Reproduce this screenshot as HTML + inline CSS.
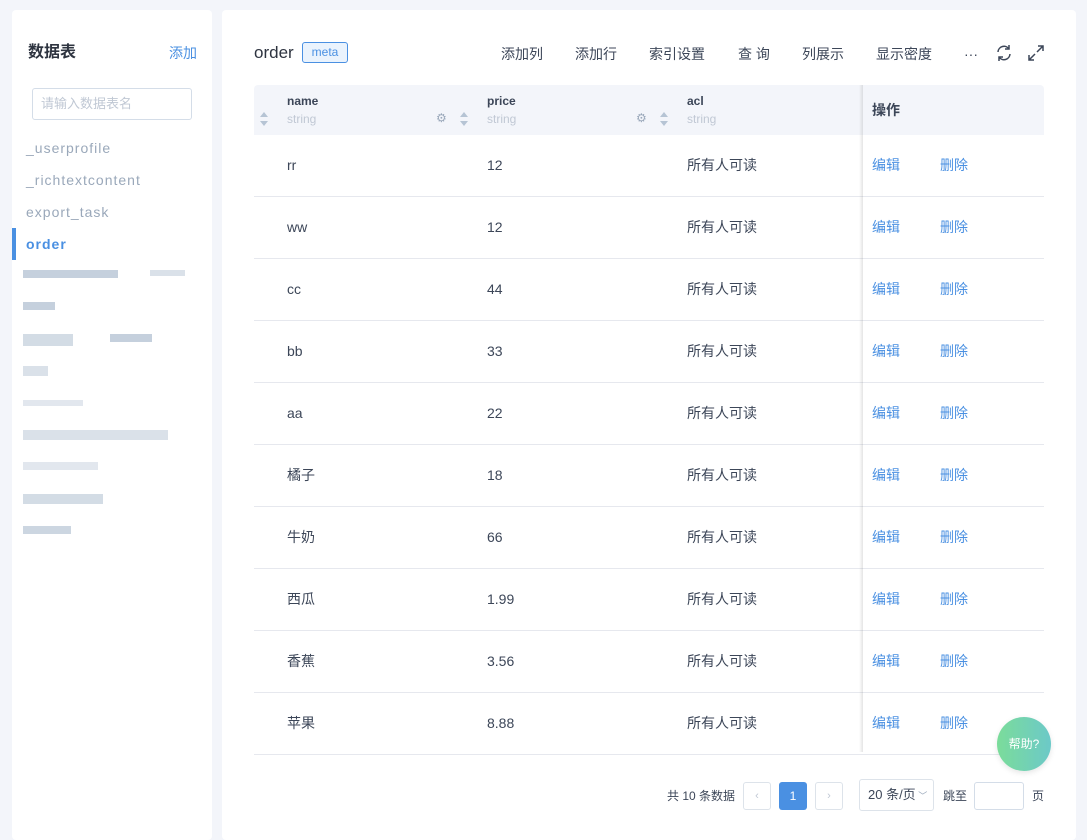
<!DOCTYPE html>
<html><head><meta charset="utf-8"><style>
*{box-sizing:border-box;margin:0;padding:0}
body{width:1087px;height:828px;background:#f3f5fa;font-family:"Liberation Sans","Noto Sans CJK SC",sans-serif;position:relative;overflow:hidden;color:#3c4658;line-height:20px}
.side{position:absolute;left:12px;top:10px;width:200px;height:830px;background:#fff;border-radius:4px}
.main{position:absolute;left:222px;top:10px;width:854px;height:830px;background:#fff;border-radius:4px}
.a{position:absolute;white-space:nowrap;line-height:20px}
.blk{position:absolute;background:#b6c4d4}
.row{position:absolute;left:254px;width:790px;height:62px;border-bottom:1px solid #e6e8ee;font-size:14px}
.row span{position:absolute;top:20px;line-height:20px}
.lk{color:#4a90e2}
</style></head><body>
<div class="side"></div>
<div class="main"></div>
<div class="a" style="left:28px;top:43px;font-size:16px;font-weight:bold;color:#2e3440">数据表</div>
<div class="a lk" style="left:169px;top:43px;font-size:14px">添加</div>
<div class="a" style="left:32px;top:88px;width:160px;height:32px;border:1px solid #d4dde8;border-radius:3px;font-size:13px;color:#c0c8d4;padding:5px 8px">请输入数据表名</div>
<div class="a" style="left:26px;top:138px;font-size:14px;color:#9aa8ba;letter-spacing:1px">_userprofile</div>
<div class="a" style="left:26px;top:170px;font-size:14px;color:#9aa8ba;letter-spacing:1px">_richtextcontent</div>
<div class="a" style="left:26px;top:202px;font-size:14px;color:#9aa8ba;letter-spacing:1px">export_task</div>
<div class="a" style="left:12px;top:228px;width:4px;height:32px;background:#4a90e2"></div>
<div class="a" style="left:26px;top:234px;font-size:14px;font-weight:bold;color:#4a90e2;letter-spacing:1px">order</div>
<div class="blk" style="left:23px;top:270px;width:95px;height:8px;opacity:.8"></div><div class="blk" style="left:150px;top:270px;width:35px;height:6px;opacity:.5"></div>
<div class="blk" style="left:23px;top:302px;width:32px;height:8px;opacity:.8"></div>
<div class="blk" style="left:23px;top:334px;width:50px;height:12px;opacity:.6"></div><div class="blk" style="left:110px;top:334px;width:42px;height:8px;opacity:.8"></div>
<div class="blk" style="left:23px;top:366px;width:25px;height:10px;opacity:.5"></div>
<div class="blk" style="left:23px;top:400px;width:60px;height:6px;opacity:.4"></div>
<div class="blk" style="left:23px;top:430px;width:145px;height:10px;opacity:.5"></div>
<div class="blk" style="left:23px;top:462px;width:75px;height:8px;opacity:.4"></div>
<div class="blk" style="left:23px;top:494px;width:80px;height:10px;opacity:.6"></div>
<div class="blk" style="left:23px;top:526px;width:48px;height:8px;opacity:.7"></div>

<div class="a" style="left:254px;top:43px;font-size:17px;color:#2e3440">order</div>
<div class="a" style="left:302px;top:42px;width:46px;height:21px;border:1px solid #4a90e2;background:#eaf3fd;border-radius:3px;font-size:12px;color:#4a90e2;text-align:center;line-height:19px">meta</div>
<div class="a" style="left:501px;top:44px;font-size:14px">添加列</div>
<div class="a" style="left:575px;top:44px;font-size:14px">添加行</div>
<div class="a" style="left:649px;top:44px;font-size:14px">索引设置</div>
<div class="a" style="left:738px;top:44px;font-size:14px">查 询</div>
<div class="a" style="left:802px;top:44px;font-size:14px">列展示</div>
<div class="a" style="left:876px;top:44px;font-size:14px">显示密度</div>
<div class="a" style="left:964px;top:44px;font-size:14px">···</div>
<svg class="a" style="left:995px;top:44px" width="18" height="18" viewBox="0 0 18 18" fill="none" stroke="#3c4658" stroke-width="1.5"><path d="M3 8a6 6 0 0 1 11-3M15 10a6 6 0 0 1-11 3"/><path d="M14 1v4h-4M4 17v-4h4"/></svg>
<svg class="a" style="left:1027px;top:44px" width="18" height="18" viewBox="0 0 18 18" fill="none" stroke="#3c4658" stroke-width="1.5"><path d="M10 8l6-6M11 2h5v5M8 10l-6 6M2 11v5h5"/></svg>

<div class="a" style="left:254px;top:85px;width:790px;height:50px;background:#f3f5fa;border-radius:4px 4px 0 0"></div>
<svg class="a" style="left:260px;top:112px" width="8" height="14"><path d="M4 0L8 5H0z M4 14L8 9H0z" fill="#b6c4d4"/></svg>
<div class="a" style="left:287px;top:91px;font-size:12px;font-weight:bold;color:#3c4658">name</div>
<div class="a" style="left:287px;top:109px;font-size:12px;color:#c0c8d4">string</div>
<div class="a" style="left:436px;top:108px;font-size:12px;color:#9aa8ba">⚙</div>
<svg class="a" style="left:460px;top:112px" width="8" height="14"><path d="M4 0L8 5H0z M4 14L8 9H0z" fill="#b6c4d4"/></svg>
<div class="a" style="left:487px;top:91px;font-size:12px;font-weight:bold">price</div>
<div class="a" style="left:487px;top:109px;font-size:12px;color:#c0c8d4">string</div>
<div class="a" style="left:636px;top:108px;font-size:12px;color:#9aa8ba">⚙</div>
<svg class="a" style="left:660px;top:112px" width="8" height="14"><path d="M4 0L8 5H0z M4 14L8 9H0z" fill="#b6c4d4"/></svg>
<div class="a" style="left:687px;top:91px;font-size:12px;font-weight:bold">acl</div>
<div class="a" style="left:687px;top:109px;font-size:12px;color:#c0c8d4">string</div>
<div class="a" style="left:872px;top:100px;font-size:14px;font-weight:bold">操作</div>

<div class="row" style="top:135px"><span style="left:33px">rr</span><span style="left:233px">12</span><span style="left:433px">所有人可读</span><span class="lk" style="left:618px">编辑</span><span class="lk" style="left:686px">删除</span></div>
<div class="row" style="top:197px"><span style="left:33px">ww</span><span style="left:233px">12</span><span style="left:433px">所有人可读</span><span class="lk" style="left:618px">编辑</span><span class="lk" style="left:686px">删除</span></div>
<div class="row" style="top:259px"><span style="left:33px">cc</span><span style="left:233px">44</span><span style="left:433px">所有人可读</span><span class="lk" style="left:618px">编辑</span><span class="lk" style="left:686px">删除</span></div>
<div class="row" style="top:321px"><span style="left:33px">bb</span><span style="left:233px">33</span><span style="left:433px">所有人可读</span><span class="lk" style="left:618px">编辑</span><span class="lk" style="left:686px">删除</span></div>
<div class="row" style="top:383px"><span style="left:33px">aa</span><span style="left:233px">22</span><span style="left:433px">所有人可读</span><span class="lk" style="left:618px">编辑</span><span class="lk" style="left:686px">删除</span></div>
<div class="row" style="top:445px"><span style="left:33px">橘子</span><span style="left:233px">18</span><span style="left:433px">所有人可读</span><span class="lk" style="left:618px">编辑</span><span class="lk" style="left:686px">删除</span></div>
<div class="row" style="top:507px"><span style="left:33px">牛奶</span><span style="left:233px">66</span><span style="left:433px">所有人可读</span><span class="lk" style="left:618px">编辑</span><span class="lk" style="left:686px">删除</span></div>
<div class="row" style="top:569px"><span style="left:33px">西瓜</span><span style="left:233px">1.99</span><span style="left:433px">所有人可读</span><span class="lk" style="left:618px">编辑</span><span class="lk" style="left:686px">删除</span></div>
<div class="row" style="top:631px"><span style="left:33px">香蕉</span><span style="left:233px">3.56</span><span style="left:433px">所有人可读</span><span class="lk" style="left:618px">编辑</span><span class="lk" style="left:686px">删除</span></div>
<div class="row" style="top:693px"><span style="left:33px">苹果</span><span style="left:233px">8.88</span><span style="left:433px">所有人可读</span><span class="lk" style="left:618px">编辑</span><span class="lk" style="left:686px">删除</span></div>
<div class="a" style="left:859px;top:85px;width:4px;height:667px;background:linear-gradient(to right,rgba(0,0,0,0),rgba(0,0,0,.1));"></div>

<div class="a" style="left:667px;top:786px;font-size:12px">共 10 条数据</div>
<div class="a" style="left:743px;top:782px;width:28px;height:28px;border:1px solid #dde3ea;border-radius:3px;text-align:center;line-height:26px;font-size:11px;color:#c0c8d4">‹</div>
<div class="a" style="left:779px;top:782px;width:28px;height:28px;background:#4a90e2;border-radius:3px;text-align:center;line-height:28px;font-size:12px;color:#fff">1</div>
<div class="a" style="left:815px;top:782px;width:28px;height:28px;border:1px solid #dde3ea;border-radius:3px;text-align:center;line-height:26px;font-size:11px;color:#c0c8d4">›</div>
<div class="a" style="left:859px;top:779px;width:75px;height:32px;border:1px solid #dde3ea;border-radius:3px;font-size:13px;line-height:30px;padding-left:8px">20 条/页<span style="color:#9aa8ba;font-size:9px"> ﹀</span></div>
<div class="a" style="left:943px;top:786px;font-size:12px">跳至</div>
<div class="a" style="left:974px;top:782px;width:50px;height:28px;border:1px solid #d4dde8;border-radius:3px"></div>
<div class="a" style="left:1032px;top:786px;font-size:12px">页</div>
<div class="a" style="left:997px;top:717px;width:54px;height:54px;border-radius:50%;background:linear-gradient(to right,#7bdc9a,#6cc9c8);color:#fff;font-size:12px;text-align:center;line-height:54px;box-shadow:0 2px 6px rgba(0,0,0,.1)">帮助?</div>
</body></html>
